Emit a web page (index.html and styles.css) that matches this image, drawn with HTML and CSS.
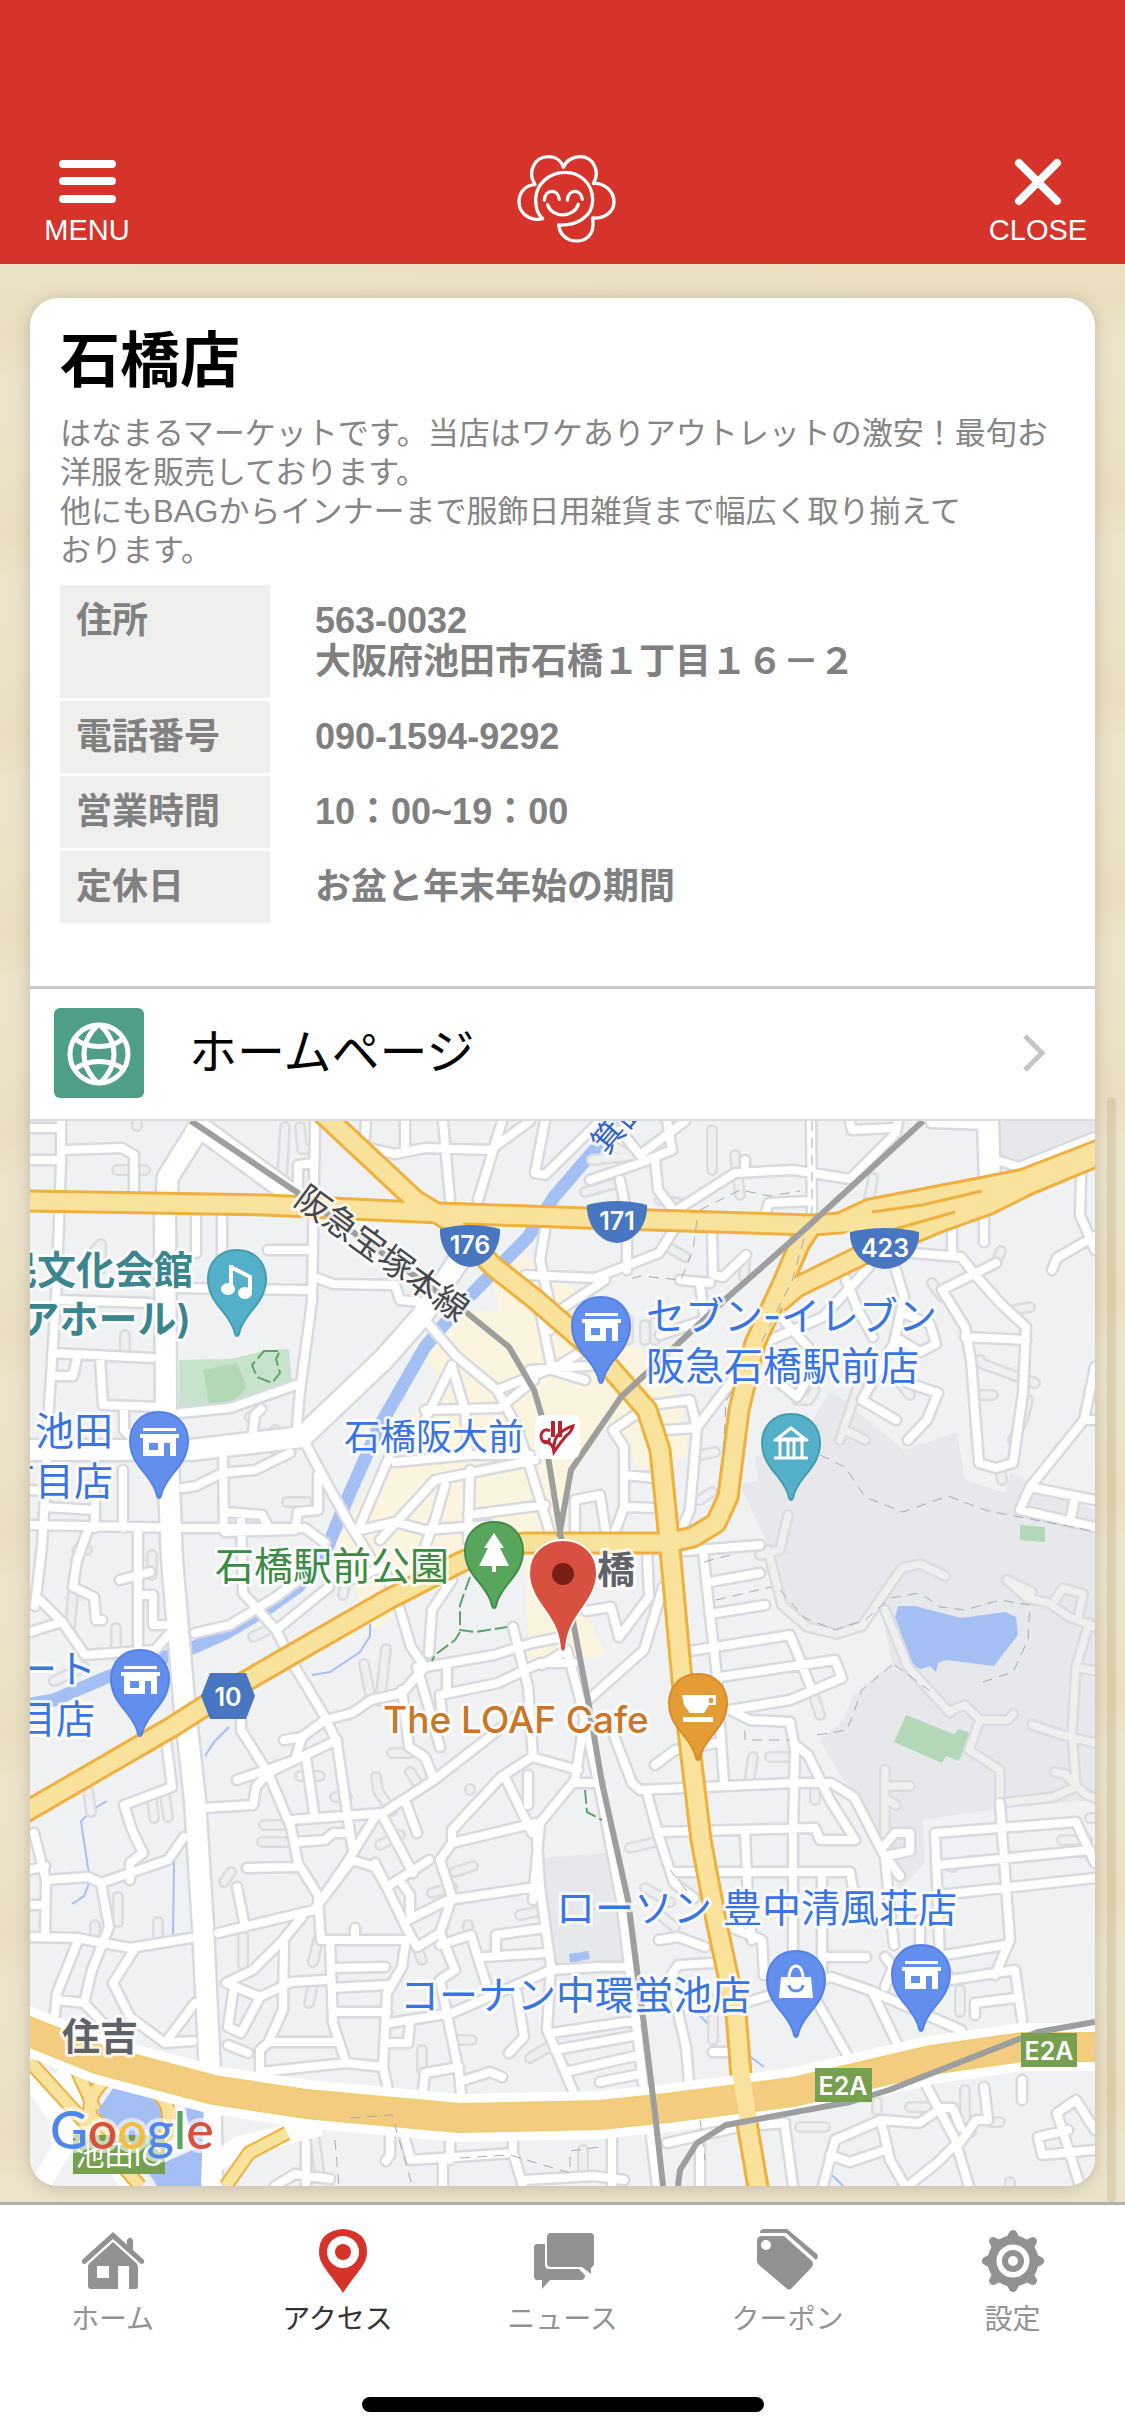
FILE: index.html
```
<!DOCTYPE html>
<html lang="ja">
<head>
  <meta charset="UTF-8">
  <title>石橋店 – アクセス</title>
  <meta name="viewport" content="width=device-width, initial-scale=1">
  <link rel="stylesheet" href="styles.css">
</head>

<body>

  <!-- Header -->
  <header>
    <button class="head-btn" type="button">
      <svg width="57" height="48" viewBox="0 0 57 48" aria-hidden="true">
        <path d="M4 6h49M4 23h49M4 41h49" stroke="#fff" stroke-width="8" stroke-linecap="round"/>
      </svg>
      <span>MENU</span>
    </button>
    <svg class="logo" viewBox="0 0 495 345" role="img" aria-label="はなまるマーケット">
      <path d="M188 236C150 245 117 220 117 185C117 155 138 135 165 134C140 95 165 50 205 50C227 50 244 62 250 82C258 62 278 50 300 50C340 50 362 95 340 130C375 128 402 155 402 185C402 215 375 236 338 234C342 262 338 278 325 290C312 302 290 306 270 300C250 292 238 275 236 255C290 258 338 230 338 180C338 130 300 97 255 97C205 97 167 135 167 180C167 205 175 225 188 236Z"/>
      <path d="M193 180C196 146 234 146 238 178M262 180C265 146 303 146 307 178M203 194C215 235 282 235 295 193"/>
    </svg>
    <button class="head-btn" type="button">
      <svg width="57" height="48" viewBox="0 0 57 48" aria-hidden="true">
        <path d="M9 5l38 38M47 5L9 43" stroke="#fff" stroke-width="8" stroke-linecap="round"/>
      </svg>
      <span>CLOSE</span>
    </button>
  </header>

  <main>
    <article class="card">

      <!-- Shop info -->
      <section class="info">
        <h1>石橋店</h1>
        <p>はなまるマーケットです。当店はワケありアウトレットの激安！最旬お洋服を販売しております。<br>他にもBAGからインナーまで服飾日用雑貨まで幅広く取り揃えて<br>おります。</p>
        <table>
          <tr><th scope="row">住所</th><td>563-0032<br>大阪府池田市石橋１丁目１６－２</td></tr>
          <tr><th scope="row">電話番号</th><td>090-1594-9292</td></tr>
          <tr><th scope="row">営業時間</th><td>10：00~19：00</td></tr>
          <tr><th scope="row">定休日</th><td>お盆と年末年始の期間</td></tr>
        </table>
      </section>

      <!-- Homepage link -->
      <a class="homepage" href="#">
        <svg class="globe" viewBox="0 0 90 90" aria-hidden="true">
          <rect width="90" height="90" rx="6" fill="#4f9f88"/>
          <g fill="none" stroke="#fff" stroke-width="5">
            <circle cx="45" cy="46" r="29"/>
            <path d="M45 16C25 34 25 58 45 76M45 16C65 34 65 58 45 76M21 31C34 41 56 41 69 31M21 61C34 51 56 51 69 61"/>
          </g>
        </svg>
        <span>ホームページ</span>
        <svg class="chevron" viewBox="0 0 24 38" aria-hidden="true">
          <path d="M3 2l17 17L3 36" fill="none" stroke="#c5c5c9" stroke-width="5"/>
        </svg>
      </a>

      <!-- Map -->
      <svg class="map" viewBox="30 1121 1065 1065" preserveAspectRatio="xMidYMid slice" role="img" aria-label="石橋店周辺の地図">
        <defs>
          <path id="pin" d="M0 1C-17 1-29 13-29 30C-29 45-21 54-13 64C-6 73-3 79-2 85Q0 89 2 85C3 79 6 73 13 64C21 54 29 45 29 30C29 13 17 1 0 1Z"/>
          <g id="shop" fill="#fff">
            <path d="M-16 17h33v3h-33zM-19 23h39v4h-3v18h-6V32h-6v13h-21V27h-3zM-10 32v7h9v-7z" fill-rule="evenodd"/>
          </g>
          <path id="shield" d="M0 4Q30-4 60 4C61 22 49 41 30 42C11 41-1 22 0 4Z"/>

          <!-- campus lanes and dead ends -->
          <path id="lanes" d="M137 1121v5M145 1170h-28M285 1127l-3 50-8 20M300 1127l2 22h12M125 1335v22M95 1250l6-6v25M275 1430v20l12 2M258 1412l-8 5M287 1502h20M77 1550h10M152 1555v20M70 1627l5-55M116 1628v28M54 1681l30-14M253 1637l18-9M343 1595l3-15M300 1776h20M335 1797h12M264 1825h25M262 1842h28M386 1650v-1l-6 52M364 1664l6 30M392 1753h18M376 1777l2 14 14 20M410 1772l8 12M380 1845l20-10M470 1790v-1M88 1790l3 22M152 1800l2 18M165 1795l3 22M231 1872l-7 10M118 1897v25M95 1925v15M158 1922v18M243 1930v35M318 1940l-5 22M313 1985l-4 18M415 1943l7 17M432 1893l20-6M455 1872l18-6M468 1925v10M520 1915l15-3M460 2040h12M422 2050v20M530 2058l20-12M315 2140l4 30M583 2150v25M645 1888l25 14M660 1915l15 12M630 1848l25-6M713 2000v40M694 2010v-3M825 2127h-25M877 2110v-8M910 2107h20M965 2090v30l6 12M1000 2122h-10M1010 2182v4M960 1990v22M712 1130v40M735 1155l5 40M868 1205l5-27M745 1262l-1 15M665 1245l20 12M610 1145l28 14M592 1160l40-4M585 1192l35-10M660 1200l22 4M628 1320v20M645 1325v15M655 1322v18M797 1400l12 0 6-10M980 1360v3l55 20M977 1395h16M1028 1400l-5 20-10 20M932 1283l10 14M996 1263l5-12M1015 1310l15-3M840 1440l20-60M845 1430l20 10M1000 1468l2 12M760 1555l20-5 8-35M768 1550l14 55 25 22 30 7 25-8 15-22 25-36 18-4 25 12M1007 1580l20 18 22 5 20 14 26 10M1007 1580l25 12M1055 1600l8-12 20 6-5 25M1089 1623l-13 44-4 66 4 54-23 10-53 6 0-33-31-20 11-30-15-15-13 5M980 1720h28l5-6M1032 1725l30 10 33 8M1055 1772l10 2 20 20 10 4M1076 1667l19 4M885 1610l23 57 42 46M885 1770v75M888 1786h22M888 1800l8 5M888 1833v15M812 1690l8 25M753 1757l-4 25M770 1757h22M815 1785v15M700 1500l12-8M700 1455l15-3M900 1383l10 12M1090 1818l5 0M1062 1840h25M945 1865l8 2"/>

          <!-- side streets -->
          <path id="streets" d="M61 1121v40l-4 120-5 80-4 60-2 60-4 65-7 60M30 1128h29M30 1160h29M62 1150l60-2 12 7v37M196 1218v35M222 1218v45M315 1121l-3 180-12 90-4 46M298 1195v-30l16-2M366 1121l-2 26 31 7 30-6 65 2 40-29M405 1121v30M443 1121l7 79M502 1121l-24 79M545 1121l-10 52 10 2 55-54M52 1353l100 5M100 1358l3 47 57 2M52 1376h21l4-18M57 1300l93 3M177 1288l129 2M268 1250h44M180 1413l50-5 66-23M124 1408v22l10 10M252 1440l3-25 6-6M223 1450l1 80M183 1488l13-2 26-13 33-3 35-17M302 1437l23 43 25 45 24 38M318 1475v35l-20 2-3 18-70 2M30 1490l30 2M30 1525l160 3 115 0 20 15M95 1485v43M45 1507l50 3M123 1470v58M225 1512l37 3 8 15M314 1277l19 7 62 1M395 1285l5 15 20 2M425 1320l32 37 40 33 20 37 20 63 15 50M452 1365l-27 55-35 35-30 70M452 1367l13 43 3 45M425 1410l75-2 34-28M497 1390l63-25 40-25M395 1462l75-7 60 0M380 1540l55-60 100-20M445 1485l-10 35-15 40M470 1470l-2 70M468 1515l77-10M360 1530l35-8 30 8 65-5M590 1180l50-17 32-13-5-29M620 1130l20 25 45-34M620 1180l8 40M655 1160l3 30 14 18M680 1208l55-35 58-3 57 9 46-46 2-12M811 1121l1 100M765 1215l4-12 42-2M850 1121l2 9 40-2M745 1168v-8M931 1123l58 2M996 1160l23 7 76-30M545 1230l-5 30 10 45 5 20M525 1275l70 3 64-25 16-25M627 1232v38M712 1230l1 45 10 2 23-22M680 1280l30 3M700 1285l5 35-45 15M560 1310l45-30M540 1310l12 60 33 10M555 1310l-5 20M530 1370l70-5M912 1253l49 4 16 20 23 26 26 24-3 66-10 70-17 5-17-5-8-103-6-33-23-37 54-27M965 1337l61 3M952 1225v30M984 1212v30M1081 1175l-1 40 15 35M1052 1270l5-12 38-22M896 1270l8 27-10 46-32 57 34 20M843 1273l15 37 15 27M869 1267l-46 50-53 23M781 1317l27 30M770 1375l27 22 12-20M908 1383l30 10-11 27-19 20M900 1340l20 12 16-8-6-20-25-10M1095 1367l-11 53-54 67-10 23 75 17M1030 1487l65 13M1075 1497l-5 25M1084 1420h11M735 1377l-38 50-7 83-12 27M613 1430l11 17v60l-11 30M613 1430l37-25 40-5 7 27M624 1475l31 3M624 1507l33 1M665 1430l32-2M575 1540v-40l25-5 7 45M672 1552l88-7M703 1550l6 57 7 60 8 116M710 1582l50-9M716 1613l49-8M684 1652l106-17 22 55M720 1677l115-17 7 18-52 22-60 10M730 1710l20 10 40 2 5 28-2 80M795 1745l13 10 22 45 25 40h-35l-5-12-155 4M613 1733l19 50 8 7 153-7 38 0 23 14 31 60 4 43 5 45M663 1587l-19 63-56 50M647 1550l2 47-30 40-8-30-25 4M586 1710l-11 70-35 43-7 77M575 1783h25M542 1665l25-15M567 1650l15 57 20 93 19 100 23 190M647 1793l12 44 15 46 20 15M674 1872h176l5 28M745 1832l3 68 4 40M793 1830v130M822 1872v100M655 1765l20-15 42-7M935 1833l141-11 19 41M935 1833l5 127 10 20M939 1865l151-15M939 1895l156-17M1000 1803l7 97 3 40-15 35M945 1955l60-10M885 1845l10-12h15v18l-25 5 15 20M30 1632l32-10 23 33 70-5 15-17M40 1600l22 22M88 1530l-11 30-4 27 21 10 2 23h6M138 1530v120M138 1595h15v30h17M120 1580l30-8M241 1520l2 73 33 37 19 37 30 50 12 26 13 90 3 17M195 1633l35-8 46-28 20-15M276 1630l53-43M350 1580l33-13 15 36 13 44 14 20-23 26-31 7-19 13-27 7-23 17-7 23-58 20M425 1667l69-12 38-12 31-6M440 1695l58-12 42-20 34 0M429 1653l3-43 20-30M417 1667l23 80M440 1695l2 20M447 1665v25M513 1627l15 60 5 70M402 1690l7 57 16 10 9 23-51 33-92 7M241 1720l0 10 27 43 23 54 7 36 23 37M268 1773l69-33M284 1740l18-3M306 1757l8 56M375 1817l-31 50-23 33M434 1780l94-73M203 1808l50-3 3-18 12-14M247 1868l51-1M295 1842l30-2 8-7h17M381 1813l32 60M406 1803l11 30M532 1757l-31 20-49 53v13l84-20M440 1860l12-17M532 1757l46 13M505 1777l27 56M528 1775l0 30M352 1860l23 7 15 26M429 1860l-39 25M166 1740l6 47-48 18 8 25 11 23-13 10v17M34 1833l12 47 42-3 13 6 67-23 16-23M30 1870l15-4M440 1860l12 37-12 36 15 37-15 10 19 93 2 20M536 1823l4 64 11 80-4 63 27 63M46 1880l-1 57M30 1937l47 1 53 10 61-10M30 1905h14M101 1883l8 44-17 43-8 33 38 40M77 1943l-20 50-3 30M57 2000l27 3M134 1950l-21 33 17 34 35 26 30-40M165 2043l28-2M218 1933l96-23 38-50M237 1887l8 40M302 1917l-19 23-30 30-27 13 34 14 31-15 34-2M318 1900l3 40h85l-4 27-15 26-4 74 5 23M330 1940l3 83 13 40M333 1968l52-1M333 1988l54-3M333 2012h54M284 1943l-1 67-15 33-8 7v22l86-9 37 4M272 2042h65M233 1993l-5 34 13 6 19-36M228 2045l20 8M375 1863l31 64 11 20 23-14M400 1880l10 15v18M408 1920l40-20 88-13M390 2023l62-10 99-43 49-3 28 0M440 1945l31-10 15 48M482 1957l65-4M496 1955v-20l49-7M355 1940v-12M387 2043h21l2-20M517 1993l7 44-15 16M551 2033l89-13M555 2050l83-15M600 2082l40-8M565 2072l35-8 40-9M423 2090l2-17 34-6M465 2080l25-8 12 5M306 2143v43M390 2133v22l-4 6M404 2135l7 25 102-7 10 33M443 2160v26M450 2138v22M513 2137v16M275 2186l20-12 35 5M524 2180l70-4 30 4M612 2135v50M651 2137l6 49M659 1940l19-3 27 10M670 1990v-13l8-12 35-2M670 1977l16 70 4 46M720 1923l42 17 2 35M737 2005l94-28 38 13 92 40M816 2000l34 60M873 1993l27 57M823 1957h43M885 1957l8 10-8 20M920 1920v30M950 1980l65-10 7 50M975 2015v-12l40-5M713 2052h18M667 2143l72-16 46-4M785 2127l8 59M700 2145v41M927 2087l30 56-20 20-29 23M823 2186l12-46 46-20 38 3 18-12M938 2108h15l8 20M881 2120l9 40 15 26M830 2155l20 7 35-12M984 2087l4 33h-12l-19 27 12 39M1022 2080v20M1095 2130l-19-30-19 13 23 73M1068 2130l-30 7 4 18 53-5"/>

          <path id="avenues" d="M203 1121l-35 56-3 40 1 190 6 153 12 140 11 100 8 127 7 146 2 113M191 1121l107 78M459 1260l-38 57-38 43-81 77-111 13H30M988 1121l2 62"/>
          <path id="highways" d="M30 1201l235 4 175 8 146 5 226 7M322 1113l93 87 33 20 46 47 42 33 61 53 50 57 13 40 11 110 11 120 19 160 15 80 20 93 7 87 20 116M22 1814l150-87 50-32 69-40 96-55 72-37 35-15 30-5h143l26-6 23-14 12-26 11-87 16-67 26-56 19-44 12-18 28-2 30-14 114-22 40-8 80-31M778 1303l19-16 65-32 78-33 50-18 40-20 75-31"/>
          <path id="ramps" d="M30 2062l50 55 60 69M70 2055l25 55M112 2075q-27 18-21 42l40 30M150 2088q26 14 16 45l-25 30M226 2186l23-33 38-20"/>
          <path id="express" d="M20 2028L100 2060 214 2090 306 2104 459 2118 600 2115 667 2108 793 2092 931 2060 1022 2047 1105 2047"/>
        </defs>

        <rect x="30" y="1121" width="1065" height="1065" fill="#f0f1f3"/>

        <!-- districts -->
        <g fill="#e7e8eb">
          <path d="M831 1390L904 1450 957 1432 965 1480 1005 1493 1011 1473 1095 1510V1800L1000 1808 923 1820 925 1863 900 1890 881 1853 858 1797 843 1780 820 1740 843 1720 854 1693 892 1663 881 1610 846 1630 820 1627 789 1607 770 1550 740 1485 758 1480 755 1457 800 1440Z"/>
          <path d="M996 1121h99v20l-75 24-24-8zM542 1858l63-5 23 110-72 5z"/>
        </g>
        <path d="M524 1255L560 1275 600 1320 640 1350 680 1400 688 1455 640 1470 610 1420 575 1470 560 1560 590 1620 606 1655 530 1668 524 1540 459 1560 376 1630 360 1600 335 1545 385 1460 440 1375 410 1345 470 1312 500 1310 490 1277Z" fill="#fbf5e0"/>
        <path d="M179 1360L230 1359 264 1351 289 1349 292 1383 230 1405 179 1408Z" fill="#c8e3cb"/>
        <path d="M203 1370L237 1363 247 1387 235 1400 209 1404ZM906 1715L954 1734 959 1729 970 1733 959 1761 946 1756 942 1763 894 1742ZM1020 1525l25 2v15l-25-2z" fill="#b2d8b8"/>
        <path d="M898 1606H915L961 1618 1005 1612 1016 1617 1018 1635 994 1666 946 1660 938 1663 936 1672 930 1666 921 1669 913 1666 895 1617ZM569 1954l19-3 2 8-20 4z" fill="#a4bff4"/>
        <g fill="none" stroke="#a4bff4">
          <path d="M620 1115L609 1133 554 1197 528 1237 459 1307 425 1347 379 1427 348 1497 325 1553 298 1587 268 1608 226 1633 195 1647 107 1677 54 1700 30 1704" stroke-width="13"/>
          <path d="M370 1624v12l-10 16-30 20-18 3M229 1727l-15 15-9 14M107 1801l-12 7-14 13 9 60-6 15-12 8M174 1860l-1 75M695 2010l24 26M744 2052l20 15M832 2175l12 12" stroke-width="2"/>
        </g>

        <!-- roads -->
        <g class="roads">
          <use href="#lanes" class="lane-edge"/>
          <use href="#lanes" class="lane"/>
          <use href="#streets" class="street-edge"/>
          <use href="#avenues" class="avenue-edge"/>
          <use href="#streets" class="street"/>
          <use href="#avenues" class="avenue"/>
          <path class="avenue" d="M30 2075l40 60-30 50M60 2070l70 116M180 2186l60-40 80-20"/>
        </g>
        <path d="M119 2080L153 2090 168 2107 166 2130 140 2150 105 2135 98 2110ZM180 2096l24 6-3 84h-44l-10-16 50-22z" fill="#a4bff4"/>
        <g class="roads">
          <use href="#highways" class="highway-edge"/>
          <use href="#highways" class="highway"/>
          <path d="M831 1232L839 1217 869 1204 984 1182 1040 1172 1050 1180 1000 1203 940 1222 900 1229Z" fill="#f8e29c"/>
          <path d="M872 1212l50-7 60-14M895 1229l60-17" stroke="#efb03f" stroke-width="3"/>
          <use href="#ramps" class="ramp-edge"/>
          <use href="#ramps" class="ramp"/>
          <use href="#express" class="express-bank"/>
          <use href="#express" class="express-edge"/>
          <use href="#express" class="express"/>
          <path class="highway" d="M740 2064L742 2080 749 2124"/>
          <path class="rail" d="M191 1121L298 1193 467 1313 509 1347 534 1390 543 1420 549 1463 561 1537 574 1627 588 1700 602 1783 628 1900 640 1993 655 2113 663 2186M923 1121L804 1230 728 1297 621 1397 571 1470 559 1537M678 2186L680 2170 697 2143 726 2125 850 2102 889 2090 1022 2038 1038 2032 1095 2022"/>
          <path class="footpath" d="M812 1121v90l-20 70-30 60-36 60-3 60M700 1210l40-20 30 6 30-5M697 1220l-4 30-12 30-40-4-16 4M820 1455l25 12 20 30 38 15 45-16 40 15 105 20M780 1590l25 28 30 12 30-10 25-22 30-5 20 14 25 3 35-10 30 5-2 35-15 32-30 10M895 1665l35 26M892 1665l-30 25-15 40-30 5M716 1600l55-13M670 1870l20 25M700 2120l5 40M335 2140l4 46M350 2118l42-3 20 70M460 2158l50-3 60 18v-22l30-4M730 1555l-30 8M745 1730v10h45"/>
          <path d="M470 1577l-10 28v25l15 2 32-5M460 1632l-5 8-20 15-3 6M585 1790l2 22 15 8M264 1351h16l-4 8 4 14-8 10-15-6-5-12z" fill="none" stroke="#5aa469" stroke-width="2" stroke-dasharray="14 4"/>
        </g>

        <!-- road signs -->
        <g class="sign">
          <use href="#shield" transform="translate(587 1201)"/><text x="617" y="1230">171</text>
          <use href="#shield" transform="translate(440 1225)"/><text x="470" y="1254">176</text>
          <path d="M850 1232q35-8 69 0c1 18-12 36-34 37-22-1-36-19-35-37z"/><text x="885" y="1257">423</text>
          <path d="M201 1696l9-23h36l9 23-9 23h-36z"/><text x="228" y="1706">10</text>
        </g>
        <g class="toll">
          <path d="M815 2068h57v34h-57zM1021 2033h56v34h-56zM73 2135h92v39H73z"/>
          <text x="843" y="2095">E2A</text><text x="1049" y="2060">E2A</text>
          <text class="toll-ic" x="119" y="2166">池田IC</text>
        </g>

        <!-- place names -->
        <g class="labels">
          <text class="line" x="381" y="1265" text-anchor="middle" transform="rotate(36 381 1255)">阪急宝塚本線</text>
          <text class="river" x="591" y="1148" transform="rotate(-50 607 1135)">箕面川</text>
          <g class="culture" text-anchor="end">
            <text x="193" y="1284">民文化会館</text>
            <text x="191" y="1333">アホール)</text>
          </g>
          <g class="store">
            <text x="646" y="1330">セブン-イレブン</text>
            <text x="646" y="1380">阪急石橋駅前店</text>
            <text x="113" y="1445" text-anchor="end">池田</text>
            <text x="113" y="1495" text-anchor="end">丁目店</text>
            <text x="96" y="1683" text-anchor="end">ート</text>
            <text x="95" y="1733" text-anchor="end">目店</text>
            <text x="556" y="1922">ローソン 豊中清風荘店</text>
            <text x="400" y="2009">コーナン中環蛍池店</text>
            <text class="station" x="344" y="1450">石橋阪大前</text>
          </g>
          <text class="park" x="215" y="1580">石橋駅前公園</text>
          <text class="cafe" x="383" y="1733">The LOAF Cafe</text>
          <text class="area" x="62" y="2050">住吉</text>
          <text class="area" x="597" y="1583">橋</text>
        </g>

        <!-- station mark -->
        <rect x="535" y="1415" width="45" height="44" rx="8" fill="#fff"/>
        <g fill="none" stroke="#b8232f">
          <path d="M553 1421v16M560 1421v16" stroke-width="4"/>
          <path d="M550 1431c-6-4-11 3-8 9 3 5 9 2 7-2M543 1441c7 1 11 5 11 12M554 1452c-1-10 1-16 7-20 5-3 7-5 12-6-1 4-3 7-6 9s-3 5-6 7z" stroke-width="3"/>
        </g>

        <!-- pins -->
        <g stroke-width="2">
          <g transform="translate(237 1249)">
            <use href="#pin" fill="#53b0c8" stroke="#449cae"/>
            <path d="M-6 18L13 28V43M-6 16V39" fill="none" stroke="#fff" stroke-width="4"/><ellipse cx="-9" cy="40" rx="7" ry="6" fill="#fff"/><ellipse cx="8" cy="44" rx="7" ry="6" fill="#fff"/>
          </g>
          <g transform="translate(159 1411)"><use href="#pin" fill="#628eed" stroke="#5581e3"/><use href="#shop"/></g>
          <g transform="translate(601 1296)"><use href="#pin" fill="#628eed" stroke="#5581e3"/><use href="#shop"/></g>
          <g transform="translate(140 1649)"><use href="#pin" fill="#628eed" stroke="#5581e3"/><use href="#shop"/></g>
          <g transform="translate(921 1944)"><use href="#pin" fill="#628eed" stroke="#5581e3"/><use href="#shop"/></g>
          <g transform="translate(796 1950)">
            <use href="#pin" fill="#628eed" stroke="#5581e3"/>
            <path d="M-15 27h30l2 21h-34z" fill="#fff"/><path d="M-7 28c0-16 14-16 14 0" fill="none" stroke="#fff" stroke-width="3"/><path d="M-7 35c1 8 13 8 14 0" fill="none" stroke="#628eed" stroke-width="3"/>
          </g>
          <g transform="translate(791 1413)">
            <use href="#pin" fill="#53b0c8" stroke="#449cae"/>
            <path d="M-14 26L0 15l14 11z M-17 27h34M-11 28v16M-3 28v16M3 28v16M11 28v16M-17 45h34" fill="none" stroke="#fff" stroke-width="3"/>
          </g>
          <g transform="translate(494 1521)">
            <use href="#pin" fill="#58a65c" stroke="#438a48"/>
            <path d="M0 12l10 15H6l9 18H2v6h-4v-6h-13l9-18h-4z" fill="#fff"/>
          </g>
          <g transform="translate(698 1673)">
            <use href="#pin" fill="#e49d35" stroke="#d98a2c"/>
            <path d="M-16 22h34v10h-7l-5 8h-14l-6-8zM-15 44h30v5h-30z" fill="#fff"/><path d="M11 25h4v5h-4z" fill="#e49d35"/>
          </g>
          <g transform="translate(563 1539)">
            <path d="M0 1C-20 1-34 15-34 34C-34 50-25 62-17 73C-8 86-4 95-3 110Q0 116 3 110C4 95 8 86 17 73C25 62 34 50 34 34C34 15 20 1 0 1Z" fill="#d8503f" stroke="#fff"/>
            <circle cy="35" r="11" fill="#7a1f18"/>
          </g>
        </g>

        <text class="google" x="50" y="2149"><tspan fill="#4f86ec">G</tspan><tspan fill="#d9503f">o</tspan><tspan fill="#f2bd42">o</tspan><tspan fill="#4f86ec">g</tspan><tspan fill="#58a65c">l</tspan><tspan fill="#d9503f">e</tspan></text>
      </svg>

    </article>
    <div class="scrollbar"></div>
  </main>

  <!-- Tab bar -->
  <nav>
    <ul>
      <li><a href="#">
        <svg viewBox="0 0 66 66" aria-hidden="true"><path d="M33 4L64 32q1 4-3 4L33 11 5 36q-4 0-3-4zM47 12q3-5 6 0v10l-6-5z"/><path fill-rule="evenodd" d="M33 14L54 33q4 3 4 6v20q0 2-2 2h-7V38H38v23H11q-3 0-3-3V39q0-3 4-6zM17 38v12h12V38z"/></svg>
        ホーム</a></li>
      <li><a href="#" class="active" aria-current="page">
        <svg viewBox="0 0 66 66" aria-hidden="true"><path fill-rule="evenodd" d="M38 1q24 2 24 23c0 13-11 21-24 41C25 45 14 37 14 24Q14 3 38 1zM38 8a16 16 0 1 0 0 32 16 16 0 1 0 0-32z"/><circle cx="38" cy="24" r="8"/></svg>
        アクセス</a></li>
      <li><a href="#">
        <svg viewBox="0 0 66 66" aria-hidden="true"><path d="M21 5h39q4 0 4 4v28l-3 3v6l-9-7H21q-4 0-4-4V9q0-4 4-4z"/><path d="M7 16h8v21q0 4 4 4h30l6 6q0 5-4 5H20l-8 9v-9H7q-3 0-3-4V20q0-4 3-4z"/></svg>
        ニュース</a></li>
      <li><a href="#">
        <svg viewBox="0 0 66 66" aria-hidden="true"><path d="M9 1h23L62 26q2 3-1 6L31 5H5q0-4 4-4z"/><path fill-rule="evenodd" d="M7 8h22L57 33q2 3 0 6L37 60q-3 3-6 0L4 37q-2-2-2-4V13q0-5 5-5zM11 12a5 5 0 1 0 0 10 5 5 0 1 0 0-10z"/></svg>
        クーポン</a></li>
      <li><a href="#">
        <svg viewBox="0 0 66 66" aria-hidden="true"><g fill="none" stroke="#929292"><circle cx="33" cy="33" r="21" stroke-width="9"/><circle cx="33" cy="33" r="8" stroke-width="6"/></g><path d="M25 12l5-9q3-2 6 0l5 9zM25 54l5 9q3 2 6 0l5-9zM12 25l-9 5q-2 3 0 6l9 5zM54 25l9 5q2 3 0 6l-9 5zM14 24l-5-10q0-5 5-5l10 5zM52 24l5-10q0-5-5-5l-10 5zM14 42l-5 10q0 5 5 5l10-5zM52 42l5 10q0 5-5 5l-10-5z"/></svg>
        設定</a></li>
    </ul>
    <div class="home-bar"></div>
  </nav>

</body>
</html>
```

FILE: styles.css
```
body {
  margin: 0;
  min-height: 100vh;
  display: flex;
  flex-direction: column;
  font-family: "Liberation Sans", "Noto Sans CJK JP", sans-serif;
  background-color: #ebe3c6;
  color: #000;
}
a {
  color: inherit;
  text-decoration: none;
}

/* Header */
header {
  display: flex;
  justify-content: space-between;
  align-items: flex-start;
  padding: 140px 36px 9px;
  background-color: #d6332b;
}
.head-btn {
  width: 102px;
  margin-top: 18px;
  padding: 0;
  border: 0;
  background: none;
  color: #fff;
  font: 29px/36px "Liberation Sans", sans-serif;
  display: flex;
  flex-direction: column;
  align-items: center;
  gap: 6px;
}
.logo {
  width: 165px;
  height: 115px;
  fill: none;
  stroke: #fff;
  stroke-width: 10;
  stroke-linecap: round;
  stroke-linejoin: round;
}

/* Card */
main {
  position: relative;
  flex: 1;
  padding: 34px 30px 16px;
  background: repeating-linear-gradient(178deg, #ebe3c6 0, #e9dfbe 70px, #ece4ca 120px, #ebe3c6 200px);
}
.card {
  overflow: hidden;
  border-radius: 28px;
  background-color: #fff;
  box-shadow: 0 2px 16px rgba(120,100,110,0.35);
}
.info {
  padding: 28px 30px 60px;
}
h1 {
  margin: 0;
  font-size: 60px;
  line-height: 72px;
}
.info p {
  margin: 16px 0 12px;
  font-size: 31px;
  line-height: 39px;
  color: #858585;
}
table {
  border-spacing: 0 3px;
  font-size: 36px;
  line-height: 41px;
  font-weight: bold;
  color: #808080;
}
th, td {
  padding: 15px 16px 16px;
  text-align: left;
  vertical-align: top;
}
th {
  width: 178px;
  background-color: #efefed;
}
td {
  padding-left: 45px;
}
.homepage {
  display: flex;
  align-items: center;
  padding: 19px 49px 21px 24px;
  border-top: 3px solid #c8c8c8;
  border-bottom: 2px solid #dcdcdc;
  font-size: 48px;
  line-height: 60px;
}
.globe {
  width: 90px;
  height: 90px;
  margin-right: 45px;
}
.chevron {
  width: 24px;
  height: 38px;
  margin-left: auto;
}
.scrollbar {
  position: absolute;
  top: 833px;
  right: 9px;
  bottom: 0;
  width: 9px;
  border-radius: 5px;
  background-color: rgba(150,130,70,0.18);
}

/* Map */
.map {
  display: block;
  width: 100%;
  aspect-ratio: 1;
}
.roads {
  fill: none;
  stroke-linejoin: round;
}
.lane-edge { stroke: #dbdce0; stroke-width: 12; stroke-linecap: round; }
.lane { stroke: #efeff0; stroke-width: 7; stroke-linecap: round; }
.street-edge { stroke: #d9dadf; stroke-width: 13; stroke-linecap: round; }
.street { stroke: #fff; stroke-width: 8; stroke-linecap: round; }
.avenue-edge { stroke: #d9dadf; stroke-width: 25; }
.avenue { stroke: #fff; stroke-width: 20; }
.highway-edge { stroke: #efb03f; stroke-width: 23; }
.highway { stroke: #f8e29c; stroke-width: 17; }
.ramp-edge { stroke: #efb03f; stroke-width: 15; }
.ramp { stroke: #f8e29c; stroke-width: 11; }
.express-bank { stroke: #fff; stroke-width: 48; }
.express-edge { stroke: #efcd72; stroke-width: 30; }
.express { stroke: #f4cc80; stroke-width: 26; }
.rail { stroke: #9e9e9e; stroke-width: 6; }
.footpath { stroke: #a9abae; stroke-width: 1; stroke-dasharray: 10 7; }
.sign { fill: #4876c1; }
.sign text, .toll text {
  fill: #fff;
  font: 600 25px Inter, sans-serif;
  text-anchor: middle;
}
.toll { fill: #76a04f; }
.toll text.toll-ic {
  font: 29px "Liberation Sans", "Noto Sans CJK JP", sans-serif;
}
.labels {
  font-family: Inter, "Noto Sans CJK JP", sans-serif;
  font-size: 39px;
  stroke: rgba(255,255,255,0.8);
  stroke-width: 6;
  stroke-linejoin: round;
  paint-order: stroke;
}
.line { font-size: 34px; fill: #45474b; }
.river { font-size: 32px; fill: #3463c0; }
.culture { font-weight: 600; fill: #3b858f; }
.store { fill: #3874e3; }
.station { font-size: 36px; }
.park { fill: #3d8a44; }
.cafe { font-size: 37px; font-weight: 500; fill: #c97626; }
.area { font-size: 38px; font-weight: 600; fill: #5f6368; }
.google {
  font: 500 52px Lato, sans-serif;
  stroke: rgba(255,255,255,0.6);
  stroke-width: 8;
  paint-order: stroke;
}

/* Tab bar */
nav {
  border-top: 3px solid #b0b0b3;
  background-color: #fff;
}
nav ul {
  display: grid;
  grid-template-columns: repeat(5, 1fr);
  margin: 0;
  padding: 23px 0 56px;
  list-style: none;
}
nav a {
  display: flex;
  flex-direction: column;
  align-items: center;
  gap: 5px;
  font-size: 28px;
  line-height: 42px;
  color: #929292;
}
nav a svg {
  width: 66px;
  height: 66px;
  fill: #929292;
}
nav a.active {
  color: #333;
}
nav a.active svg {
  fill: #d6332b;
}
.home-bar {
  width: 402px;
  height: 15px;
  margin: 0 auto 24px;
  border-radius: 8px;
  background-color: #000;
}
```
